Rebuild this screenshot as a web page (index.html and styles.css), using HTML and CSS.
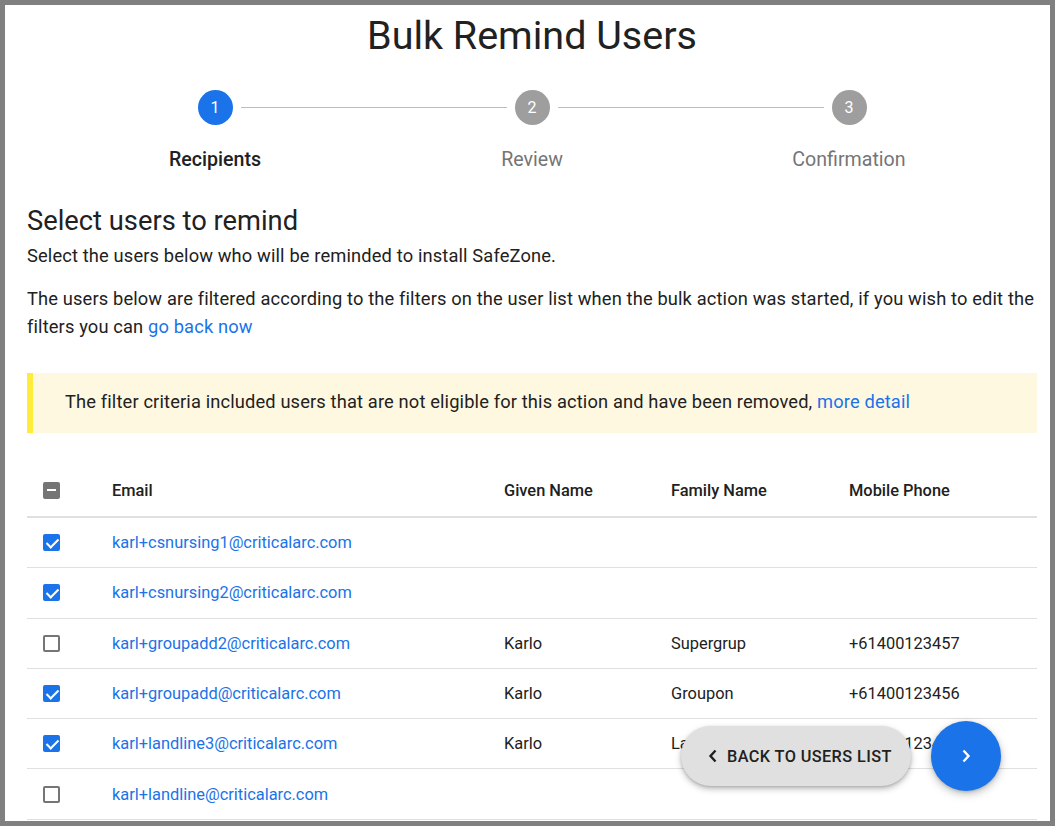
FILE: index.html
```html
<!DOCTYPE html>
<html lang="en">
<head>
    <meta charset="UTF-8">
    <meta name="viewport" content="width=device-width, initial-scale=1.0">
    <title>Bulk Remind Users</title>
    <link rel="stylesheet" href="styles.css">
</head>
<body>
    <div class="window">
        <div class="content">
            <h1 class="title">Bulk Remind Users</h1>

            <div class="stepper">
                <div class="step">
                    <div class="step-head">
                        <span class="line hidden"></span>
                        <span class="circle active">1</span>
                        <span class="line"></span>
                    </div>
                    <div class="step-label current">Recipients</div>
                </div>
                <div class="step">
                    <div class="step-head">
                        <span class="line"></span>
                        <span class="circle">2</span>
                        <span class="line"></span>
                    </div>
                    <div class="step-label">Review</div>
                </div>
                <div class="step">
                    <div class="step-head">
                        <span class="line"></span>
                        <span class="circle">3</span>
                        <span class="line hidden"></span>
                    </div>
                    <div class="step-label">Confirmation</div>
                </div>
            </div>

            <h2 class="subtitle">Select users to remind</h2>
            <p class="text first">Select the users below who will be reminded to install SafeZone.</p>
            <p class="text">The users below are filtered according to the filters on the user list when the bulk action was started, if you wish to edit the filters you can <a href="#">go back now</a></p>

            <div class="alert">
                The filter criteria included users that are not eligible for this action and have been removed, <a href="#">more detail</a>
            </div>

            <table class="users">
                <colgroup>
                    <col class="c-check">
                    <col class="c-email">
                    <col class="c-given">
                    <col class="c-family">
                    <col class="c-phone">
                </colgroup>
                <thead>
                    <tr>
                        <th><span class="box some"></span></th>
                        <th>Email</th>
                        <th>Given Name</th>
                        <th>Family Name</th>
                        <th>Mobile Phone</th>
                    </tr>
                </thead>
                <tbody>
                    <tr>
                        <td><span class="box on"></span></td>
                        <td><a href="#">karl+csnursing1@criticalarc.com</a></td>
                        <td></td><td></td><td></td>
                    </tr>
                    <tr>
                        <td><span class="box on"></span></td>
                        <td><a href="#">karl+csnursing2@criticalarc.com</a></td>
                        <td></td><td></td><td></td>
                    </tr>
                    <tr>
                        <td><span class="box"></span></td>
                        <td><a href="#">karl+groupadd2@criticalarc.com</a></td>
                        <td>Karlo</td>
                        <td>Supergrup</td>
                        <td>+61400123457</td>
                    </tr>
                    <tr>
                        <td><span class="box on"></span></td>
                        <td><a href="#">karl+groupadd@criticalarc.com</a></td>
                        <td>Karlo</td>
                        <td>Groupon</td>
                        <td>+61400123456</td>
                    </tr>
                    <tr>
                        <td><span class="box on"></span></td>
                        <td><a href="#">karl+landline3@criticalarc.com</a></td>
                        <td>Karlo</td>
                        <td>Landline</td>
                        <td>+61400123458</td>
                    </tr>
                    <tr>
                        <td><span class="box"></span></td>
                        <td><a href="#">karl+landline@criticalarc.com</a></td>
                        <td></td><td></td><td></td>
                    </tr>
                </tbody>
            </table>
        </div>

        <div class="actions">
            <button class="back" type="button">
                <svg width="10" height="14" viewBox="0 0 10 14"><path d="M7.5 1.5 2.5 7l5 5.5" fill="none" stroke="#212121" stroke-width="2.4"/></svg>
                BACK TO USERS LIST
            </button>
            <button class="next" type="button">
                <svg width="10" height="14" viewBox="0 0 10 14"><path d="M2.5 1.5 7.5 7l-5 5.5" fill="none" stroke="#fff" stroke-width="2.4"/></svg>
            </button>
        </div>
    </div>
</body>
</html>
```

FILE: styles.css
```css
html, body {
    margin: 0;
    background: #808080;
    font-family: Roboto, "Liberation Sans", sans-serif;
    color: #212121;
}

.window {
    position: relative;
    margin: 5px;
    height: 816px;
    background: #fff;
    overflow: hidden;
}

.content {
    padding: 0 13px 0 22px;
}

.title {
    margin: 7px 0 0;
    font-size: 39.5px;
    line-height: 48px;
    font-weight: 400;
    text-align: center;
}

/* stepper */
.stepper {
    display: grid;
    grid-template-columns: 1fr 1fr 1fr;
    width: 951px;
    margin: 30px auto 0;
}

.step-head {
    display: flex;
    align-items: center;
}

.line {
    flex: 1;
    height: 1px;
    background: #bdbdbd;
}

.line.hidden {
    visibility: hidden;
}

.circle {
    width: 35px;
    height: 35px;
    margin: 0 8px;
    border-radius: 50%;
    background: #9e9e9e;
    color: #fff;
    font-size: 16px;
    line-height: 35px;
    text-align: center;
}

.circle.active {
    background: #1a73e8;
}

.step-label {
    margin-top: 23px;
    font-size: 19.6px;
    line-height: 24px;
    text-align: center;
    color: #757575;
}

.step-label.current {
    color: #212121;
    font-weight: 500;
}

.subtitle {
    margin: 33px 0 0;
    font-size: 27.3px;
    line-height: 32px;
    font-weight: 400;
}

.text {
    margin: 15px 0 0;
    font-size: 18.3px;
    letter-spacing: 0.14px;
    line-height: 28px;
}

.text.first {
    margin-top: 5px;
}

a {
    color: #1a73e8;
    text-decoration: none;
}

.alert {
    margin-top: 32px;
    height: 60px;
    box-sizing: border-box;
    padding: 0 0 0 32px;
    border-left: 6px solid #ffeb3b;
    background: #fff8e1;
    font-size: 18.3px;
    letter-spacing: 0.14px;
    line-height: 58px;
}

/* table */
.users {
    width: 100%;
    margin-top: 28px;
    border-collapse: collapse;
    table-layout: fixed;
    font-size: 16.4px;
}

.c-check { width: 69px; }
.c-email { width: 392px; }
.c-given { width: 167px; }
.c-family { width: 178px; }

.users th {
    height: 52px;
    padding: 3px 16px 0;
    text-align: left;
    font-weight: 500;
    border-bottom: 2px solid #e0e0e0;
}

.users td {
    height: 49.3px;
    padding: 0 16px;
    border-bottom: 1px solid #e0e0e0;
}

.box {
    display: block;
    width: 17px;
    height: 17px;
    box-sizing: border-box;
    border: 2px solid #757575;
    border-radius: 2px;
    position: relative;
}

.box.on {
    border-color: #1a73e8;
    background: #1a73e8;
}

.box.on::after {
    content: "";
    position: absolute;
    left: 4px;
    top: 0px;
    width: 5px;
    height: 10px;
    border: solid #fff;
    border-width: 0 2px 2px 0;
    transform: rotate(45deg);
}

.box.some {
    background: #757575;
}

.box.some::after {
    content: "";
    position: absolute;
    left: 2px;
    right: 2px;
    top: 5.5px;
    height: 2px;
    background: #fff;
}

/* floating actions */
.actions {
    position: absolute;
    right: 49px;
    bottom: 30px;
    display: flex;
    align-items: center;
    gap: 20px;
}

.back {
    display: flex;
    align-items: center;
    gap: 9px;
    height: 60px;
    width: 230px;
    padding: 0 0 0 27px;
    border: none;
    border-radius: 30px;
    background: #e0e0e0;
    color: #212121;
    font-family: inherit;
    font-size: 16.3px;
    font-weight: 500;
    letter-spacing: 0.4px;
    box-shadow: 0 3px 6px rgba(0,0,0,0.25), 0 1px 3px rgba(0,0,0,0.15);
}

.next {
    display: flex;
    align-items: center;
    justify-content: center;
    width: 70px;
    height: 70px;
    padding: 0;
    border: none;
    border-radius: 50%;
    background: #1a73e8;
    box-shadow: 0 3px 8px rgba(0,0,0,0.25), 0 1px 3px rgba(0,0,0,0.15);
}
```
